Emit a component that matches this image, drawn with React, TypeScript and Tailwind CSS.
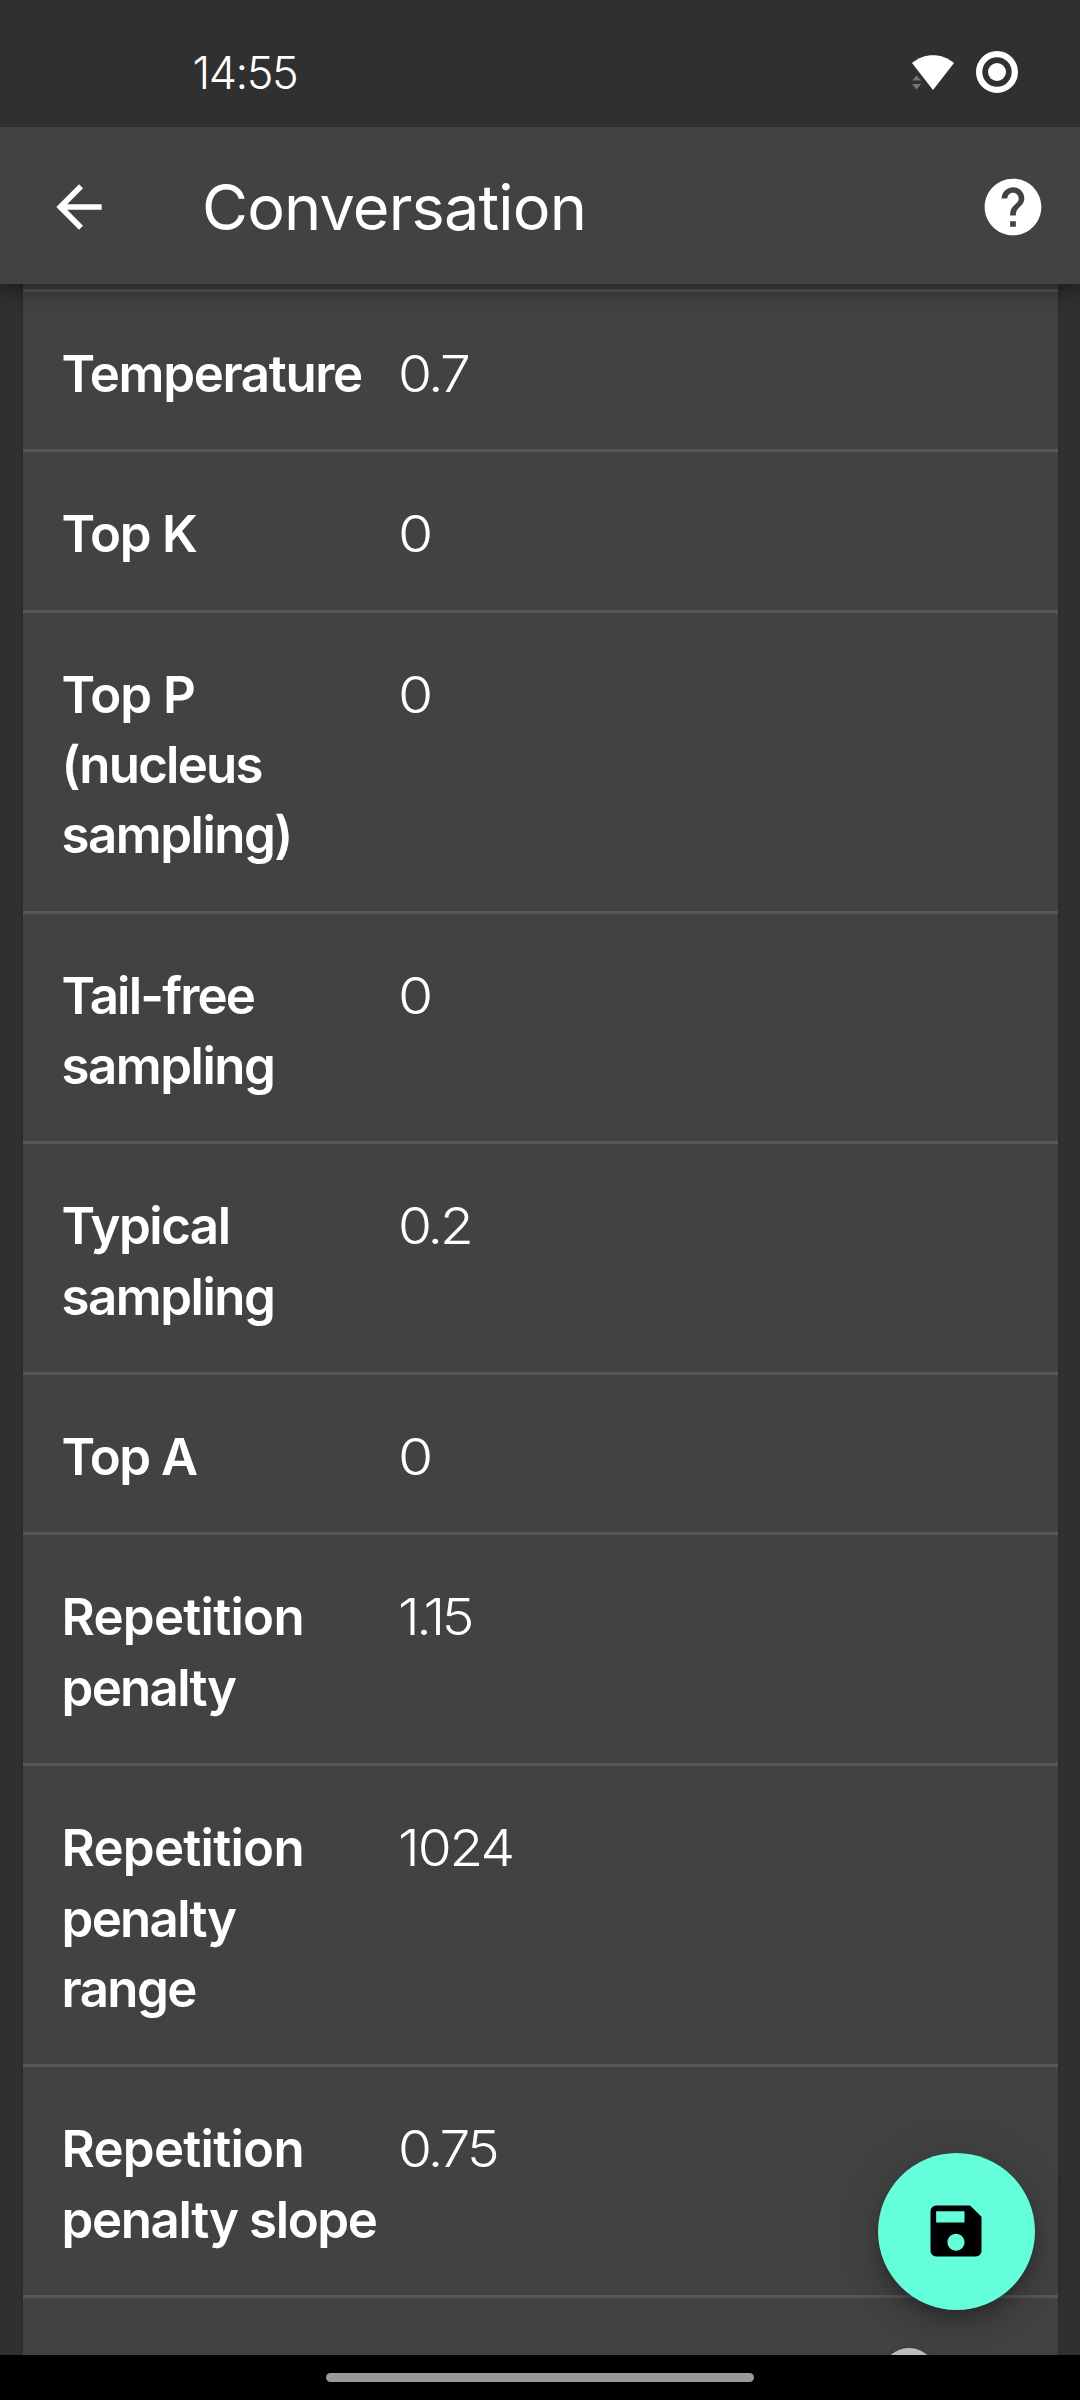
import { MdArrowBack, MdHelp, MdSave } from "react-icons/md";

type Line = { text: string; cls: string };
type Setting = { label: Line[]; value: Line };

const settings: Setting[] = [
  {
    label: [{ text: "Temperature", cls: "tracking-[-1.36px]" }],
    value: { text: "0.7", cls: "scale-x-[1.08] tracking-[-2.5px]" },
  },
  {
    label: [{ text: "Top K", cls: "tracking-[-1.2px]" }],
    value: { text: "0", cls: "scale-x-[1.12]" },
  },
  {
    label: [
      { text: "Top P", cls: "tracking-[-1px]" },
      { text: "(nucleus", cls: "tracking-[-1.8px]" },
      { text: "sampling)", cls: "tracking-[-1.5px]" },
    ],
    value: { text: "0", cls: "scale-x-[1.12]" },
  },
  {
    label: [
      { text: "Tail-free", cls: "tracking-[-1.8px]" },
      { text: "sampling", cls: "tracking-[-1.5px]" },
    ],
    value: { text: "0", cls: "scale-x-[1.12]" },
  },
  {
    label: [
      { text: "Typical", cls: "tracking-[-1.5px]" },
      { text: "sampling", cls: "tracking-[-1.5px]" },
    ],
    value: { text: "0.2", cls: "scale-x-[1.08] tracking-[-2.9px]" },
  },
  {
    label: [{ text: "Top A", cls: "tracking-[-1.45px]" }],
    value: { text: "0", cls: "scale-x-[1.12]" },
  },
  {
    label: [
      { text: "Repetition", cls: "tracking-[-0.73px]" },
      { text: "penalty", cls: "tracking-[-1.7px]" },
    ],
    value: { text: "1.15", cls: "scale-x-[1.08] tracking-[-3.2px]" },
  },
  {
    label: [
      { text: "Repetition", cls: "tracking-[-0.73px]" },
      { text: "penalty", cls: "tracking-[-1.7px]" },
      { text: "range", cls: "tracking-[-1.6px]" },
    ],
    value: { text: "1024", cls: "scale-x-[1.08] tracking-[-1.9px]" },
  },
  {
    label: [
      { text: "Repetition", cls: "tracking-[-0.73px]" },
      { text: "penalty slope", cls: "tracking-[-1.37px]" },
    ],
    value: { text: "0.75", cls: "scale-x-[1.08] tracking-[-2.7px]" },
  },
];

function StatusBar() {
  return (
    <div className="relative z-20 flex h-[127px] shrink-0 items-start justify-between bg-[#303030] pr-[62px] pl-[192.500px]">
      <span className="mt-[46px] text-[45px] leading-[54px] font-[350] tracking-[-1.5px]">14:55</span>
      <div className="mt-[51px] flex gap-[22px]">
        <svg width="42" height="42" viewBox="0 0 42 42">
          <path d="M0 12C12 1.500 30 1.500 42 12L21 39Z" fill="#fff" />
          <path d="M4.500 24.500 9.300 29.500H0ZM0 33H9.300L4.500 38.500Z" fill="#747474" />
        </svg>
        <svg width="42" height="42" viewBox="0 0 42 42">
          <circle cx="21" cy="21" r="17.850" fill="none" stroke="#fff" strokeWidth="6.300" />
          <circle cx="21" cy="21" r="9" fill="#fff" />
        </svg>
      </div>
    </div>
  );
}

function AppBar() {
  return (
    <header className="relative z-10 flex h-[157px] shrink-0 items-center bg-[#424242] pr-[33.500px] pl-[45px] shadow-[0_6px_11px_-3px_rgba(0,0,0,0.2),0_11px_14px_0_rgba(0,0,0,0.14),0_3px_28px_0_rgba(0,0,0,0.12)]">
      <MdArrowBack className="mt-0.5 size-[68px]" />
      <h1 className="mt-0.5 ml-[89px] grow text-[63px] leading-[76px] tracking-[-0.85px]">Conversation</h1>
      <MdHelp className="mt-0.5 size-[68px]" />
    </header>
  );
}

function Row({ label, value }: Setting) {
  return (
    <div className="flex border-b-[3px] border-[#575757] pt-[47px] pb-[39.900px] pl-[39px] text-[51px] leading-[70.400px]">
      <div className="w-[336.500px] shrink-0 font-semibold whitespace-nowrap">
        {label.map((line) => (
          <div key={line.text} className={line.cls}>
            {line.text}
          </div>
        ))}
      </div>
      <div className={"origin-left self-start font-light " + value.cls}>{value.text}</div>
    </div>
  );
}

export default function App() {
  return (
    <div className="relative flex h-[2400px] w-[1080px] flex-col overflow-hidden bg-[#303030] font-['Inter',sans-serif] text-white">
      <StatusBar />
      <AppBar />
      <main className="min-h-0 grow overflow-hidden px-[22.500px]">
        <div className="h-full bg-[#424242] shadow-[0_0_3px_rgba(0,0,0,0.25)]">
          <div className="h-2 border-b-[3px] border-[#575757]" />
          {settings.map((s, i) => (
            <Row key={i} {...s} />
          ))}
          <div className="flex justify-end pt-[50px] pr-[121px]">
            <div className="size-14 rounded-full bg-[#bdbdbd] shadow-[0_3px_8px_rgba(0,0,0,0.3)]" />
          </div>
        </div>
      </main>
      <nav className="z-20 flex h-[45px] shrink-0 justify-center bg-black pt-[18px]">
        <div className="h-[9px] w-[428px] rounded-full bg-[#999999]" />
      </nav>
      <button className="absolute right-[45px] bottom-[90px] z-10 flex size-[157.500px] items-center justify-center rounded-full bg-[#64ffda] text-black shadow-[0_8px_14px_-3px_rgba(0,0,0,0.2),0_17px_28px_0_rgba(0,0,0,0.14),0_3px_50px_0_rgba(0,0,0,0.12)]">
        <MdSave className="size-[68px]" />
      </button>
    </div>
  );
}
